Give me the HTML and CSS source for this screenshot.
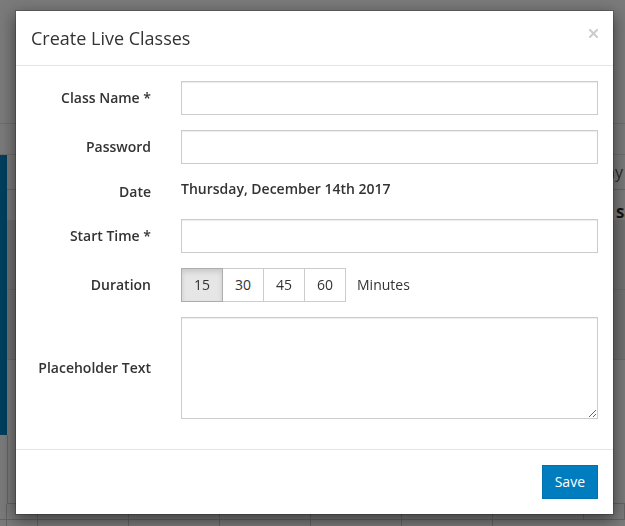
FILE: index.html
```html
<!DOCTYPE html>
<html lang="en">
<head>
<meta charset="utf-8">
<title>Create Live Classes</title>
<link rel="stylesheet" href="styles.css">
</head>
<body>
<div class="page">
  <header class="topbar"></header>
  <div class="subbar"></div>
  <section class="panel">
    <div class="panel-side"></div>
    <div class="panel-main">
      <div class="filter"><span class="filter-text">Today</span></div>
      <div class="week-head">
        <span class="gutter"></span>
        <span></span><span></span><span></span><span></span><span></span><span></span><span class="day">Sat</span>
      </div>
      <div class="band"><div class="band-half"></div><div class="band-half"></div></div>
    </div>
  </section>
  <div class="lower"></div>
  <div class="week-grid">
    <span></span><span></span><span></span><span></span><span></span><span></span><span></span><span></span>
    <span></span><span></span><span></span><span></span><span></span><span></span><span></span><span></span>
  </div>
</div>

<div class="backdrop"></div>

<div class="modal-layer">
  <div class="modal">
    <div class="modal-header">
      <h4 class="modal-title">Create Live Classes</h4>
      <button class="close" type="button" aria-label="Close">
        <svg width="9" height="9" viewBox="0 0 9 9"><path d="M1 1L8 8M8 1L1 8" stroke="#cccccc" stroke-width="2" stroke-linecap="square"/></svg>
      </button>
    </div>
    <form class="modal-body">
      <div class="form-row">
        <label class="form-label">Class Name *</label>
        <input class="form-control" type="text">
      </div>
      <div class="form-row">
        <label class="form-label">Password</label>
        <input class="form-control" type="password">
      </div>
      <div class="form-row date-row">
        <span class="form-label">Date</span>
        <p class="static">Thursday, December 14th 2017</p>
      </div>
      <div class="form-row">
        <label class="form-label">Start Time *</label>
        <input class="form-control" type="text">
      </div>
      <div class="form-row">
        <label class="form-label">Duration</label>
        <div class="duration">
          <div class="btn-group">
            <button class="btn active" type="button">15</button>
            <button class="btn" type="button">30</button>
            <button class="btn" type="button">45</button>
            <button class="btn" type="button">60</button>
          </div>
          <span class="unit">Minutes</span>
        </div>
      </div>
      <div class="form-row text-row">
        <label class="form-label">Placeholder Text</label>
        <textarea class="form-control textarea"></textarea>
      </div>
    </form>
    <div class="modal-footer">
      <button class="btn-primary" type="button">Save</button>
    </div>
  </div>
</div>
</body>
</html>
```

FILE: styles.css
```css
* { box-sizing: border-box; }
html, body { margin: 0; height: 100%; }
body {
  font-family: "Open Sans", "Liberation Sans", sans-serif;
  font-size: 14px;
  line-height: 20px;
  color: #333;
  background: #f5f5f5;
  overflow: hidden;
}

/* underlying page */
.page { height: 526px; overflow: hidden; }
.topbar { height: 124px; border-bottom: 1px solid #dcdcdc; }
.subbar { height: 31px; border-bottom: 1px solid #dcdcdc; }
.panel { display: flex; height: 280px; }
.panel-side { width: 7px; background: #007ebc; flex: none; }
.panel-main { flex: 1; display: flex; flex-direction: column; min-width: 0; }
.filter {
  height: 35px;
  border-bottom: 1px solid #cfcfcf;
  display: flex;
  justify-content: flex-end;
  align-items: center;
  padding-right: 2px;
  color: #555;
  font-size: 16px;
}
.week-head {
  display: grid;
  grid-template-columns: 31px repeat(7, 91px);
  height: 30px;
  align-items: end;
  font-weight: 700;
  color: #222;
  font-size: 15px;
  line-height: 16px;
}
.week-head .day { padding-left: 32px; }
.band { height: 140px; background: #e2e2e2; display: flex; flex-direction: column; }
.band-half { flex: 1; border-bottom: 1px solid #d2d2d2; }
.lower {
  height: 69px;
  margin-left: 7px;
  border-left: 1px solid #c8c8c8;
  border-bottom: 1px solid #c8c8c8;
}
.week-grid {
  display: grid;
  grid-template-columns: 7px 31px repeat(6, 91px) 1fr;
  grid-auto-rows: 16px;
}
.week-grid span { border-right: 1px solid #c8c8c8; border-bottom: 1px solid #c8c8c8; }

/* overlay */
.backdrop { position: fixed; inset: 0; background: rgba(0, 0, 0, 0.5); }
.modal-layer { position: fixed; inset: 0; padding: 10px 0 0 15px; }
.modal {
  width: 599px;
  background: #fff;
  border: 1px solid rgba(0, 0, 0, 0.2);
  background-clip: padding-box;
  box-shadow: 0 5px 15px rgba(0, 0, 0, 0.5);
}
.modal-header {
  display: flex;
  justify-content: space-between;
  align-items: flex-start;
  padding: 15px;
  border-bottom: 1px solid #e5e5e5;
}
.modal-title {
  margin: 0;
  font-size: 18px;
  line-height: 24px;
  font-weight: 400;
  color: #333;
}
.close {
  border: 0;
  background: none;
  padding: 0;
  margin-top: 3px;
  cursor: pointer;
}
.close svg { display: block; }

.modal-body {
  margin: 0;
  padding: 15px 15px 30px;
  display: flex;
  flex-direction: column;
  gap: 15px;
}
.form-row {
  display: grid;
  grid-template-columns: 120px 1fr;
  column-gap: 30px;
}
.form-label {
  text-align: right;
  font-weight: 600;
  padding-top: 7px;
  line-height: 20px;
}
.form-control {
  display: block;
  width: 100%;
  height: 34px;
  padding: 6px 12px;
  font: inherit;
  color: #555;
  background: #fff;
  border: 1px solid #ccc;
  border-radius: 0;
  box-shadow: inset 0 1px 1px rgba(0, 0, 0, 0.075);
}
.date-row { height: 25px; }
.date-row .form-label { padding-top: 3px; }
.static { margin: 0; font-weight: 600; line-height: 20px; }

.duration { display: flex; align-items: center; gap: 11px; }
.btn-group { display: flex; }
.btn {
  width: 42px;
  height: 34px;
  padding: 0;
  font: inherit;
  color: #333;
  background: #fff;
  border: 1px solid #ccc;
  border-radius: 0;
  position: relative;
}
.btn + .btn { margin-left: -1px; }
.btn.active {
  background: #e6e6e6;
  border-color: #adadad;
  box-shadow: inset 0 3px 5px rgba(0, 0, 0, 0.125);
  z-index: 1;
}
.unit { color: #333; }

.text-row { align-items: center; }
.text-row .form-label { padding-top: 0; }
.textarea { height: 102px; resize: vertical; }

.modal-footer {
  padding: 15px;
  border-top: 1px solid #e5e5e5;
  display: flex;
  justify-content: flex-end;
}
.btn-primary {
  height: 34px;
  padding: 6px 12px;
  font: inherit;
  color: #fff;
  background: #007dbe;
  border: 1px solid #0072ae;
  border-radius: 0;
}
```
